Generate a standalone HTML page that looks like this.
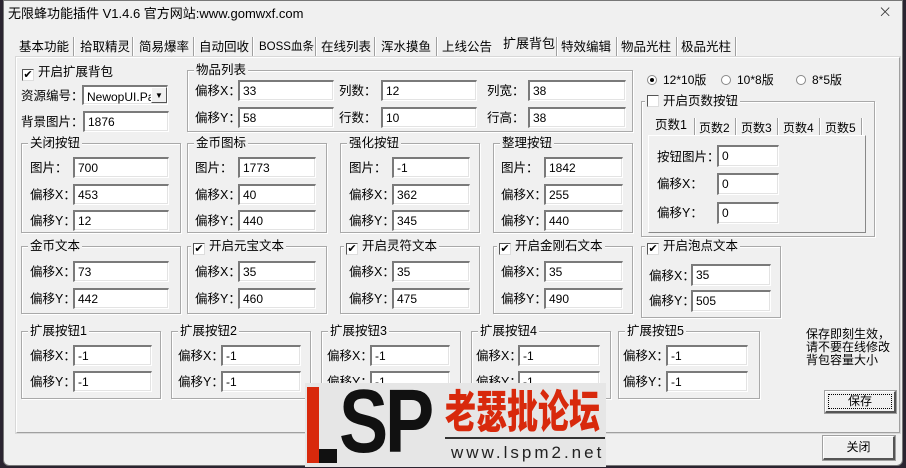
<!DOCTYPE html>
<html><head><meta charset="utf-8">
<style>
*{box-sizing:border-box;margin:0;padding:0}
body{width:906px;height:468px;overflow:hidden;background:#2a2430;position:relative;font-family:"Liberation Sans","Noto Sans CJK SC",sans-serif;font-size:12px;color:#000}
.win{position:absolute;left:3px;top:0;width:900px;height:466px;background:#f0f0f0;border-radius:0 0 6px 6px;border:1px solid #777}
.a{position:absolute;white-space:nowrap;line-height:14px}
.panel{position:absolute;left:12px;top:56px;width:884px;height:376px;border:1px solid #fff;border-right-color:#a0a0a0;border-bottom-color:#a0a0a0;outline:1px solid #d8d8d8}
.inp{position:absolute;background:#fff;border:1px solid #fff;border-top:2px solid #7a7a7a;border-left:2px solid #7a7a7a;box-shadow:inset -1px -1px 0 #e3e3e3;font-size:12px;line-height:14px;padding:2px 0 0 3px}
.grp{position:absolute;border:1px solid #a9a9a9;box-shadow:1px 1px 0 #fff inset,1px 1px 0 #fff}
.gt{position:absolute;background:#f0f0f0;padding:0 2px;top:-8px;left:6px;line-height:14px;white-space:nowrap;font-size:12.5px}
.cb{display:inline-block;width:12px;height:12px;border:1px solid #555;border-right-color:#ddd;border-bottom-color:#ddd;background:#fff;vertical-align:-2px;margin-right:4px;position:relative;font-size:11px;line-height:10px;text-align:center}
.tab{position:absolute;top:38px;font-size:12.5px;line-height:16px;white-space:nowrap}
.sep{position:absolute;top:36px;width:2px;height:20px;border-left:1px solid #a0a0a0;border-right:1px solid #fff}
.btn{position:absolute;background:#f0f0f0;border:1px solid #fff;border-right:2px solid #555;border-bottom:2px solid #555;outline:1px solid #a0a0a0;text-align:center;font-size:12px}
.rd{display:inline-block;width:10px;height:10px;border-radius:50%;border:1px solid #888;background:#fff;vertical-align:-1px;margin-right:6px;position:relative}
.l{position:absolute;white-space:nowrap;line-height:14px;font-size:12.5px}
</style></head><body>
<div class="win">
<div class="a" style="left:4px;top:6px;font-size:13px">无限蜂功能插件 V1.4.6  官方网站:www.gomwxf.com</div>
<div class="a" style="left:874px;top:4px;font-size:17px;font-weight:100;color:#333;font-family:'DejaVu Sans',sans-serif">×</div>

<div class="tab" style="left:15px">基本功能</div><div class="sep" style="left:69px"></div>
<div class="tab" style="left:76px">拾取精灵</div><div class="sep" style="left:128px"></div>
<div class="tab" style="left:135px">简易爆率</div><div class="sep" style="left:189px"></div>
<div class="tab" style="left:195px">自动回收</div><div class="sep" style="left:248px"></div>
<div class="tab" style="left:255px;font-size:11.5px">BOSS血条</div><div class="sep" style="left:311px"></div>
<div class="tab" style="left:317px">在线列表</div><div class="sep" style="left:370px"></div>
<div class="tab" style="left:377px">浑水摸鱼</div><div class="sep" style="left:432px"></div>
<div class="tab" style="left:438px">上线公告</div>
<div class="tab" style="left:499px;top:35px;font-size:13px">扩展背包</div><div class="sep" style="left:552px"></div>
<div class="tab" style="left:557px">特效编辑</div><div class="sep" style="left:612px"></div>
<div class="tab" style="left:617px">物品光柱</div><div class="sep" style="left:672px"></div>
<div class="tab" style="left:677px">极品光柱</div><div class="sep" style="left:731px"></div>

<div class="panel"></div>

<div class="l" style="left:18px;top:64px"><span class="cb">✔</span>开启扩展背包</div>
<div class="l" style="left:17px;top:88px">资源编号：</div>
<div class="inp" style="left:78px;top:84px;width:86px;height:20px;padding-top:3px;overflow:hidden">NewopUI.Pak</div>
<div style="position:absolute;left:147px;top:86px;width:16px;height:16px;background:#f0f0f0;border:1px solid #fff;border-right-color:#555;border-bottom-color:#555;font-size:8px;text-align:center;line-height:15px">▼</div>
<div class="l" style="left:17px;top:114px">背景图片：</div>
<div class="inp" style="left:79px;top:110px;width:86px;height:21px">1876</div>

<div class="grp" style="left:183px;top:69px;width:446px;height:62px"><div class="gt">物品列表</div></div>
<div class="l" style="left:191px;top:83px">偏移X：</div><div class="inp" style="left:234px;top:79px;width:96px;height:21px">33</div>
<div class="l" style="left:191px;top:110px">偏移Y：</div><div class="inp" style="left:234px;top:106px;width:96px;height:21px">58</div>
<div class="l" style="left:335px;top:83px">列数：</div><div class="inp" style="left:377px;top:79px;width:96px;height:21px">12</div>
<div class="l" style="left:335px;top:110px">行数：</div><div class="inp" style="left:377px;top:106px;width:96px;height:21px">10</div>
<div class="l" style="left:483px;top:83px">列宽：</div><div class="inp" style="left:524px;top:79px;width:98px;height:21px">38</div>
<div class="l" style="left:483px;top:110px">行高：</div><div class="inp" style="left:524px;top:106px;width:98px;height:21px">38</div>

<div class="a" style="left:643px;top:72px"><span class="rd"><span style="position:absolute;left:2px;top:2px;width:4px;height:4px;border-radius:50%;background:#000"></span></span>12*10版</div>
<div class="a" style="left:717px;top:72px"><span class="rd"></span>10*8版</div>
<div class="a" style="left:792px;top:72px"><span class="rd"></span>8*5版</div>

<div class="grp" style="left:637px;top:100px;width:234px;height:136px"><div class="gt" style="left:3px"><span class="cb"></span>开启页数按钮</div></div>
<div style="position:absolute;left:644px;top:134px;width:218px;height:98px;border:1px solid #fff;border-right-color:#888;border-bottom-color:#888"></div>
<div class="a" style="left:651px;top:117px;font-size:12.5px">页数1</div>
<div class="sep" style="left:690px;top:117px;height:17px"></div>
<div class="a" style="left:695px;top:120px">页数2</div><div class="sep" style="left:731px;top:117px;height:17px"></div>
<div class="a" style="left:737px;top:120px">页数3</div><div class="sep" style="left:773px;top:117px;height:17px"></div>
<div class="a" style="left:779px;top:120px">页数4</div><div class="sep" style="left:815px;top:117px;height:17px"></div>
<div class="a" style="left:821px;top:120px">页数5</div><div class="sep" style="left:857px;top:117px;height:17px"></div>
<div class="l" style="left:653px;top:149px">按钮图片：</div><div class="inp" style="left:713px;top:144px;width:62px;height:22px">0</div>
<div class="l" style="left:653px;top:176px">偏移X：</div><div class="inp" style="left:713px;top:172px;width:62px;height:22px">0</div>
<div class="l" style="left:653px;top:205px">偏移Y：</div><div class="inp" style="left:713px;top:201px;width:62px;height:22px">0</div>

<div class="grp" style="left:17px;top:142px;width:160px;height:90px"><div class="gt">关闭按钮</div></div>
<div class="l" style="left:26px;top:160px">图片：</div><div class="inp" style="left:69px;top:156px;width:96px;height:21px">700</div>
<div class="l" style="left:26px;top:187px">偏移X：</div><div class="inp" style="left:69px;top:183px;width:96px;height:21px">453</div>
<div class="l" style="left:26px;top:213px">偏移Y：</div><div class="inp" style="left:69px;top:209px;width:96px;height:21px">12</div>

<div class="grp" style="left:183px;top:142px;width:140px;height:90px"><div class="gt">金币图标</div></div>
<div class="l" style="left:191px;top:160px">图片：</div><div class="inp" style="left:234px;top:156px;width:78px;height:21px">1773</div>
<div class="l" style="left:191px;top:187px">偏移X：</div><div class="inp" style="left:234px;top:183px;width:78px;height:21px">40</div>
<div class="l" style="left:191px;top:213px">偏移Y：</div><div class="inp" style="left:234px;top:209px;width:78px;height:21px">440</div>

<div class="grp" style="left:336px;top:142px;width:140px;height:90px"><div class="gt">强化按钮</div></div>
<div class="l" style="left:345px;top:160px">图片：</div><div class="inp" style="left:388px;top:156px;width:78px;height:21px">-1</div>
<div class="l" style="left:345px;top:187px">偏移X：</div><div class="inp" style="left:388px;top:183px;width:78px;height:21px">362</div>
<div class="l" style="left:345px;top:213px">偏移Y：</div><div class="inp" style="left:388px;top:209px;width:78px;height:21px">345</div>

<div class="grp" style="left:489px;top:142px;width:140px;height:90px"><div class="gt">整理按钮</div></div>
<div class="l" style="left:497px;top:160px">图片：</div><div class="inp" style="left:540px;top:156px;width:79px;height:21px">1842</div>
<div class="l" style="left:497px;top:187px">偏移X：</div><div class="inp" style="left:540px;top:183px;width:79px;height:21px">255</div>
<div class="l" style="left:497px;top:213px">偏移Y：</div><div class="inp" style="left:540px;top:209px;width:79px;height:21px">440</div>

<div class="grp" style="left:17px;top:245px;width:160px;height:68px"><div class="gt">金币文本</div></div>
<div class="l" style="left:26px;top:264px">偏移X：</div><div class="inp" style="left:69px;top:260px;width:96px;height:21px">73</div>
<div class="l" style="left:26px;top:291px">偏移Y：</div><div class="inp" style="left:69px;top:287px;width:96px;height:21px">442</div>

<div class="grp" style="left:183px;top:245px;width:140px;height:68px"><div class="gt" style="left:3px"><span class="cb">✔</span>开启元宝文本</div></div>
<div class="l" style="left:191px;top:264px">偏移X：</div><div class="inp" style="left:234px;top:260px;width:78px;height:21px">35</div>
<div class="l" style="left:191px;top:291px">偏移Y：</div><div class="inp" style="left:234px;top:287px;width:78px;height:21px">460</div>

<div class="grp" style="left:336px;top:245px;width:140px;height:68px"><div class="gt" style="left:3px"><span class="cb">✔</span>开启灵符文本</div></div>
<div class="l" style="left:345px;top:264px">偏移X：</div><div class="inp" style="left:388px;top:260px;width:78px;height:21px">35</div>
<div class="l" style="left:345px;top:291px">偏移Y：</div><div class="inp" style="left:388px;top:287px;width:78px;height:21px">475</div>

<div class="grp" style="left:489px;top:245px;width:140px;height:68px"><div class="gt" style="left:3px"><span class="cb">✔</span>开启金刚石文本</div></div>
<div class="l" style="left:497px;top:264px">偏移X：</div><div class="inp" style="left:540px;top:260px;width:79px;height:21px">35</div>
<div class="l" style="left:497px;top:291px">偏移Y：</div><div class="inp" style="left:540px;top:287px;width:79px;height:21px">490</div>

<div class="grp" style="left:637px;top:245px;width:140px;height:72px"><div class="gt" style="left:3px"><span class="cb">✔</span>开启泡点文本</div></div>
<div class="l" style="left:645px;top:268px">偏移X：</div><div class="inp" style="left:687px;top:263px;width:80px;height:22px">35</div>
<div class="l" style="left:645px;top:293px">偏移Y：</div><div class="inp" style="left:687px;top:289px;width:80px;height:22px">505</div>

<div class="grp" style="left:17px;top:330px;width:140px;height:68px"><div class="gt">扩展按钮1</div></div>
<div class="l" style="left:26px;top:348px">偏移X：</div><div class="inp" style="left:69px;top:344px;width:79px;height:21px">-1</div>
<div class="l" style="left:26px;top:374px">偏移Y：</div><div class="inp" style="left:69px;top:370px;width:79px;height:21px">-1</div>

<div class="grp" style="left:167px;top:330px;width:140px;height:68px"><div class="gt">扩展按钮2</div></div>
<div class="l" style="left:174px;top:348px">偏移X：</div><div class="inp" style="left:217px;top:344px;width:80px;height:21px">-1</div>
<div class="l" style="left:174px;top:374px">偏移Y：</div><div class="inp" style="left:217px;top:370px;width:80px;height:21px">-1</div>

<div class="grp" style="left:317px;top:330px;width:140px;height:68px"><div class="gt">扩展按钮3</div></div>
<div class="l" style="left:323px;top:348px">偏移X：</div><div class="inp" style="left:366px;top:344px;width:80px;height:21px">-1</div>
<div class="l" style="left:323px;top:374px">偏移Y：</div><div class="inp" style="left:366px;top:370px;width:80px;height:21px">-1</div>

<div class="grp" style="left:467px;top:330px;width:140px;height:68px"><div class="gt">扩展按钮4</div></div>
<div class="l" style="left:472px;top:348px">偏移X：</div><div class="inp" style="left:514px;top:344px;width:82px;height:21px">-1</div>
<div class="l" style="left:472px;top:374px">偏移Y：</div><div class="inp" style="left:514px;top:370px;width:82px;height:21px">-1</div>

<div class="grp" style="left:614px;top:330px;width:142px;height:68px"><div class="gt">扩展按钮5</div></div>
<div class="l" style="left:619px;top:348px">偏移X：</div><div class="inp" style="left:662px;top:344px;width:82px;height:21px">-1</div>
<div class="l" style="left:619px;top:374px">偏移Y：</div><div class="inp" style="left:662px;top:370px;width:82px;height:21px">-1</div>

<div class="a" style="left:802px;top:327px;font-size:12px;line-height:13px">保存即刻生效，<br>请不要在线修改<br>背包容量大小</div>

<div class="btn" style="left:821px;top:390px;width:71px;height:22px;line-height:17px"><div style="margin:2px;border:1px dotted #000;height:15px;line-height:13px">保存</div></div>
<div class="btn" style="left:819px;top:435px;width:72px;height:24px;line-height:21px">关闭</div>
</div>

<div style="position:absolute;left:305px;top:383px;width:301px;height:84px;background:#e6e6e6;overflow:hidden">
  <div style="position:absolute;left:2px;top:4px;width:12px;height:76px;background:#d8290c"></div>
  <div style="position:absolute;left:14px;top:66px;width:18px;height:14px;background:#111"></div>
  <div style="position:absolute;left:34px;top:-6px;font-family:'Liberation Sans',sans-serif;font-weight:bold;font-size:90px;line-height:90px;color:#111;letter-spacing:-4px;transform:scaleX(0.82);transform-origin:left top;white-space:nowrap">SP</div>
  <div style="position:absolute;left:140px;top:-2px;font-family:'Noto Sans CJK SC',sans-serif;font-weight:900;font-size:31px;line-height:38px;color:#d8290c;white-space:nowrap;transform:scaleY(1.45);transform-origin:left top">老瑟批论坛</div>
  <div style="position:absolute;left:140px;top:54px;width:160px;height:2px;background:#333"></div>
  <div style="position:absolute;left:146px;top:60px;font-family:'Liberation Sans',sans-serif;font-size:17px;line-height:20px;color:#222;letter-spacing:3px;white-space:nowrap">www.lspm2.net</div>
</div>
</body></html>
